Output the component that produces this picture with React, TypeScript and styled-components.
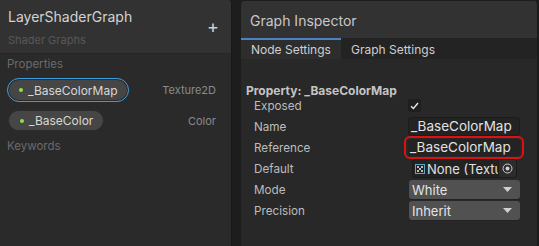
import styled, { createGlobalStyle } from 'styled-components';

const Global = createGlobalStyle`
  html, body { margin: 0; padding: 0; background: #1d1d1d; }
  body { font-family: Inter, "Noto Sans", sans-serif; -webkit-font-smoothing: antialiased; }
`;

const Page = styled.div`
  display: flex;
  width: 539px;
  height: 246px;
  background: #1d1d1d;
  overflow: hidden;
`;

const Blackboard = styled.div`
  width: 231px;
  display: flex;
  flex-direction: column;
  background: #2a2a2a;
  border-right: 1px solid #191919;
  border-top-right-radius: 4px;
  overflow: hidden;
`;

const BoardHeader = styled.div`
  height: 54px;
  box-sizing: border-box;
  padding: 8px 0 0 8px;
  background: #323232;
  border-bottom: 1px solid #262626;
  position: relative;
`;

const Title = styled.div`
  color: #d2d2d2;
  font-size: 14px;
  line-height: 18px;
`;

const Subtitle = styled.div`
  color: #585858;
  font-size: 11px;
  line-height: 15px;
  margin-top: 7px;
`;

const AddButton = styled.span`
  position: absolute;
  right: 12px;
  top: 18px;
  color: #d0d0d0;
  font-size: 18px;
  line-height: 18px;
`;

const Section = styled.div<{ $pt?: number }>`
  color: #6a6a6a;
  font-size: 11.5px;
  line-height: 15px;
  padding: ${p => p.$pt ?? 3}px 0 0 7px;
`;

const FieldRow = styled.div<{ $mt: number }>`
  display: flex;
  align-items: center;
  justify-content: space-between;
  padding: 0 15px 0 7px;
  margin-top: ${p => p.$mt}px;
`;

const Pill = styled.div<{ $selected?: boolean }>`
  display: flex;
  align-items: center;
  gap: 5px;
  height: ${p => (p.$selected ? 24 : 21)}px;
  box-sizing: border-box;
  padding: 0 10px 0 11px;
  margin-left: ${p => (p.$selected ? 0 : 1)}px;
  border-radius: 12px;
  background: #464646;
  border: 1px solid ${p => (p.$selected ? '#3a9ddb' : '#2c2c2c')};
  box-shadow: ${p => (p.$selected ? '0 0 0 1px #2a2a2a inset' : 'none')};
  color: #d8d8d8;
  font-size: 12px;
`;

const Dot = styled.span`
  width: 4px;
  height: 4px;
  border-radius: 50%;
  background: #8ee04a;
`;

const TypeLabel = styled.span`
  color: #8a8a8a;
  font-size: 11px;
`;

const Inspector = styled.div`
  margin-left: 9px;
  width: 296px;
  display: flex;
  flex-direction: column;
  background: #282828;
  border-right: 1px solid #191919;
  border-top-right-radius: 4px;
  border-top-left-radius: 4px;
  margin-top: 1px;
  overflow: hidden;
`;

const InspectorHeader = styled.div`
  height: 37px;
  box-sizing: border-box;
  padding: 11px 0 0 9px;
  background: #323232;
  color: #c8c8c8;
  font-size: 14px;
  line-height: 17px;
`;

const Tabs = styled.div`
  display: flex;
  height: 21px;
  background: #232323;
`;

const Tab = styled.div<{ $active?: boolean }>`
  ${p => (p.$active ? 'width: 100px;' : '')}
  box-sizing: border-box;
  padding: 2px 0 0 10px;
  border-top: 2px solid ${p => (p.$active ? '#4a82c4' : 'transparent')};
  background: ${p => (p.$active ? '#2d2d2d' : 'transparent')};
  color: #cfcfcf;
  font-size: 12px;
  line-height: 15px;
`;

const InspectorBody = styled.div`
  padding: 25px 0 0 5px;
`;

const PropTitle = styled.div`
  color: #c4c4c4;
  font-size: 12px;
  font-weight: 700;
  line-height: 14px;
`;

const Grid = styled.div`
  display: grid;
  grid-template-columns: 154px 1fr;
  grid-auto-rows: 21px;
  align-items: center;
  padding-left: 8px;
  margin-top: -3px;
`;

const Label = styled.div`
  color: #bcbcbc;
  font-size: 11.7px;
`;

const Check = styled.div`
  width: 13px;
  height: 13px;
  border-radius: 2px;
  background: #1f1f1f;
  display: flex;
  align-items: center;
  justify-content: center;
`;

const TextField = styled.div<{ $bare?: boolean }>`
  width: 112px;
  height: ${p => (p.$bare ? 17 : 19)}px;
  box-sizing: border-box;
  border: ${p => (p.$bare ? 'none' : '1px solid #1c1c1c')};
  border-radius: 3px;
  background: #232323;
  color: #e2e2e2;
  font-size: 13.5px;
  line-height: 17px;
  padding-left: 2px;
`;

const Highlight = styled.div`
  display: inline-flex;
  margin-left: -4px;
  padding: 1px 2px;
  border: 2px solid #e01010;
  border-radius: 6px;
  width: fit-content;
`;

const ObjectField = styled.div`
  display: flex;
  align-items: center;
  width: 105px;
  height: 19px;
  box-sizing: border-box;
  margin-left: 4px;
  background: #222222;
  border: 1px solid #1b1b1b;
  border-radius: 3px;
  color: #e0e0e0;
  font-size: 13px;
  overflow: hidden;
`;

const ObjectText = styled.span`
  flex: 1;
  white-space: nowrap;
  overflow: hidden;
  padding-left: 2px;
`;

const Picker = styled.span`
  width: 17px;
  height: 17px;
  display: flex;
  align-items: center;
  justify-content: center;
  background: #2c2c2c;
  border-left: 1px solid #1b1b1b;
`;

const Dropdown = styled.div`
  display: flex;
  align-items: center;
  justify-content: space-between;
  width: 111px;
  height: 19px;
  box-sizing: border-box;
  padding: 0 8px 0 3px;
  margin-left: 1px;
  background: #515151;
  border-radius: 3px;
  color: #e4e4e4;
  font-size: 13px;
  box-shadow: 0 1px 0 #222;
`;

function Arrow() {
  return (
    <svg width="9" height="5" viewBox="0 0 9 5">
      <path d="M0 0 L9 0 L4.5 5 Z" fill="#cfcfcf" />
    </svg>
  );
}

export default function App() {
  return (
    <Page>
      <Global />
      <Blackboard>
        <BoardHeader>
          <Title>LayerShaderGraph</Title>
          <Subtitle>Shader Graphs</Subtitle>
          <AddButton>+</AddButton>
        </BoardHeader>
        <Section>Properties</Section>
        <FieldRow $mt={6}>
          <Pill $selected>
            <Dot />
            _BaseColorMap
          </Pill>
          <TypeLabel>Texture2D</TypeLabel>
        </FieldRow>
        <FieldRow $mt={8}>
          <Pill>
            <Dot />
            _BaseColor
          </Pill>
          <TypeLabel>Color</TypeLabel>
        </FieldRow>
        <Section $pt={8}>Keywords</Section>
      </Blackboard>

      <Inspector>
        <InspectorHeader>Graph Inspector</InspectorHeader>
        <Tabs>
          <Tab $active>Node Settings</Tab>
          <Tab>Graph Settings</Tab>
        </Tabs>
        <InspectorBody>
          <PropTitle>Property: _BaseColorMap</PropTitle>
          <Grid>
            <Label>Exposed</Label>
            <Check>
              <svg width="9" height="8" viewBox="0 0 9 8">
                <path d="M1 4.2 L3.4 6.5 L8 1" stroke="#e8e8e8" strokeWidth="1.4" fill="none" />
              </svg>
            </Check>
            <Label>Name</Label>
            <TextField>_BaseColorMap</TextField>
            <Label>Reference</Label>
            <Highlight>
              <TextField $bare>_BaseColorMap</TextField>
            </Highlight>
            <Label>Default</Label>
            <ObjectField>
              <svg width="10" height="10" viewBox="0 0 10 10" style={{ marginLeft: 2 }}>
                <rect x="0.5" y="0.5" width="9" height="9" fill="none" stroke="#5aa7c8" />
                <path d="M2 2h2v2H2zM6 2h2v2H6zM4 4h2v2H4zM2 6h2v2H2zM6 6h2v2H6z" fill="#bdbdbd" />
              </svg>
              <ObjectText>None (Texture)</ObjectText>
              <Picker>
                <svg width="11" height="11" viewBox="0 0 11 11">
                  <circle cx="5.5" cy="5.5" r="4.5" stroke="#d0d0d0" strokeWidth="1" fill="none" />
                  <circle cx="5.5" cy="5.5" r="2" fill="#d0d0d0" />
                </svg>
              </Picker>
            </ObjectField>
            <Label>Mode</Label>
            <Dropdown>
              White
              <Arrow />
            </Dropdown>
            <Label>Precision</Label>
            <Dropdown>
              Inherit
              <Arrow />
            </Dropdown>
          </Grid>
        </InspectorBody>
      </Inspector>
    </Page>
  );
}
